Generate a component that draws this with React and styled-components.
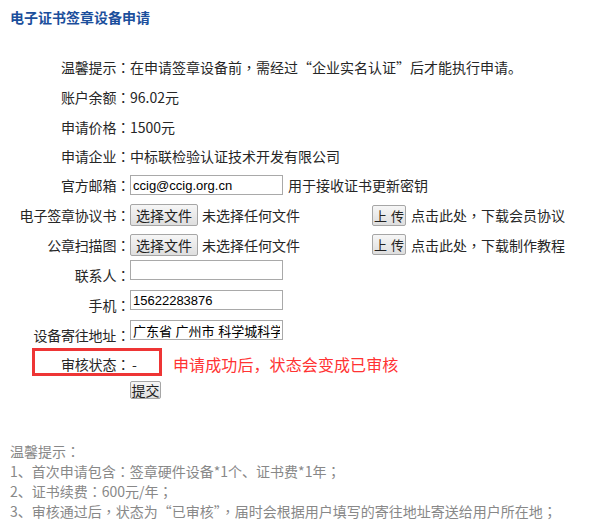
import React from 'react';
import styled, { createGlobalStyle } from 'styled-components';

const GlobalStyle = createGlobalStyle`
  body {
    margin: 0;
    background: #fff;
    font-family: "Noto Sans CJK SC", "Liberation Sans", sans-serif;
    font-size: 14px;
    line-height: 20px;
    color: #262626;
  }
`;

const rows = [
  { label: '温馨提示：', value: '在申请签章设备前，需经过“企业实名认证”后才能执行申请。', h: 30 },
  { label: '账户余额：', value: '96.02元', h: 30 },
  { label: '申请价格：', value: '1500元', h: 29 },
  { label: '申请企业：', value: '中标联检验认证技术开发有限公司', h: 29 },
];

const files = [
  { label: '电子签章协议书：', link: '点击此处，下载会员协议', h: 30 },
  { label: '公章扫描图：', link: '点击此处，下载制作教程', h: 29 },
];

const contacts = [
  { label: '联系人：', value: '' },
  { label: '手机：', value: '15622283876' },
  { label: '设备寄往地址：', value: '广东省 广州市 科学城科学大道' },
];

const tips = [
  '温馨提示：',
  '1、首次申请包含：签章硬件设备*1个、证书费*1年；',
  '2、证书续费：600元/年；',
  '3、审核通过后，状态为“已审核”，届时会根据用户填写的寄往地址寄送给用户所在地；',
];

// full-width colons / commas sit centred in the original font
function withPunct(text) {
  return text.split(/([：，；])/).map((part, i) =>
    /^[：，；]$/.test(part) ? <Punct key={i}>{part}</Punct> : part
  );
}

function App() {
  return (
    <Page>
      <GlobalStyle />
      <Title>电子证书签章设备申请</Title>
      <Form>
        {rows.map((r) => (
          <Row key={r.label} $h={r.h}>
            <Label>{withPunct(r.label)}</Label>
            <Value>{withPunct(r.value)}</Value>
          </Row>
        ))}
        <Row $h={30}>
          <Label>{withPunct('官方邮箱：')}</Label>
          <Value>
            <TextInput defaultValue="ccig@ccig.org.cn" />
            <Hint>用于接收证书更新密钥</Hint>
          </Value>
        </Row>
        {files.map((f) => (
          <Row key={f.label} $h={f.h}>
            <Label>{withPunct(f.label)}</Label>
            <Value>
              <FileField>
                <GrayButton type="button">选择文件</GrayButton>
                <span>未选择任何文件</span>
              </FileField>
              <UploadButton type="button">上 传</UploadButton>
              <Hint>{withPunct(f.link)}</Hint>
            </Value>
          </Row>
        ))}
        {contacts.map((c) => (
          <Row key={c.label} $h={30} $top>
            <Label $bottom>{withPunct(c.label)}</Label>
            <Value $start>
              <TextInput defaultValue={c.value} />
            </Value>
          </Row>
        ))}
        <Row $h={28} $mark>
          <Label>{withPunct('审核状态：')}</Label>
          <Value>
            <Status>-</Status>
            <Note>申请成功后，状态会变成已审核</Note>
          </Value>
          <MarkBox />
        </Row>
        <SubmitRow>
          <SubmitButton type="button">提交</SubmitButton>
        </SubmitRow>
      </Form>
      <Tips>
        {tips.map((t) => (
          <TipLine key={t}>{withPunct(t)}</TipLine>
        ))}
      </Tips>
    </Page>
  );
}

const Page = styled.div`
  width: 604px;
  min-height: 529px;
`;

const Title = styled.div`
  padding-left: 10px;
  height: 34px;
  line-height: 34px;
  font-size: 14px;
  font-weight: bold;
  color: #1c4f9c;
`;

const Form = styled.div`
  padding-top: 18px;
  display: flex;
  flex-direction: column;
`;

const Punct = styled.span`
  font-family: "Noto Sans CJK TC", "Noto Sans CJK SC", sans-serif;
`;

const Row = styled.div`
  position: relative;
  height: ${(p) => p.$h}px;
  display: grid;
  grid-template-columns: 130px 1fr;
  align-items: ${(p) => (p.$top ? 'stretch' : 'center')};
  margin-top: ${(p) => (p.$mark ? '1px' : '0')};
`;

const Label = styled.div`
  text-align: right;
  white-space: nowrap;
  letter-spacing: -0.2px;
  align-self: ${(p) => (p.$bottom ? 'end' : 'center')};
  padding-bottom: ${(p) => (p.$bottom ? '4px' : '0')};
`;

const Value = styled.div`
  display: flex;
  align-items: ${(p) => (p.$start ? 'flex-start' : 'center')};
  padding-top: ${(p) => (p.$start ? '1px' : '0')};
  white-space: pre;
`;

const TextInput = styled.input`
  box-sizing: border-box;
  width: 153px;
  height: 20px;
  margin: 0;
  padding: 1px 2px;
  border: 1px solid #a9a9a9;
  font-family: "Liberation Sans", "Noto Sans CJK SC", sans-serif;
  font-size: 13px;
  color: #000;
  outline: none;
`;

const Hint = styled.span`
  margin-left: 5px;
`;

const FileField = styled.div`
  width: 242px;
  display: flex;
  align-items: center;
  gap: 4px;
`;

const GrayButton = styled.button`
  box-sizing: border-box;
  height: 22px;
  width: 68px;
  margin: 0;
  padding: 0;
  border: 1px solid #a6a6a6;
  border-radius: 2px;
  background: linear-gradient(#f6f6f6, #dedede);
  font-family: "Noto Sans CJK SC", sans-serif;
  font-size: 14px;
  line-height: 20px;
  color: #222;
  white-space: pre;
`;

const UploadButton = styled(GrayButton)`
  width: 34px;
  height: 21px;
  font-size: 13px;
  word-spacing: 1px;
`;

const Status = styled.span`
  width: 43px;
  padding-left: 2px;
  box-sizing: border-box;
`;

const Note = styled.span`
  font-size: 16px;
  color: #ff3333;
  letter-spacing: 0.1px;
`;

const MarkBox = styled.div`
  position: absolute;
  left: 32px;
  top: -2px;
  width: 130px;
  height: 28px;
  box-sizing: border-box;
  border: 3px solid #ee3535;
  pointer-events: none;
`;

const SubmitRow = styled.div`
  padding: 2px 0 0 130px;
  height: 20px;
`;

const SubmitButton = styled(GrayButton)`
  width: 31px;
  height: 18px;
  font-size: 14px;
  line-height: 16px;
`;

const Tips = styled.div`
  margin-top: 41px;
  padding-left: 10px;
  color: #888;
`;

const TipLine = styled.div`
  line-height: 20px;
  white-space: nowrap;
`;

export default App;
